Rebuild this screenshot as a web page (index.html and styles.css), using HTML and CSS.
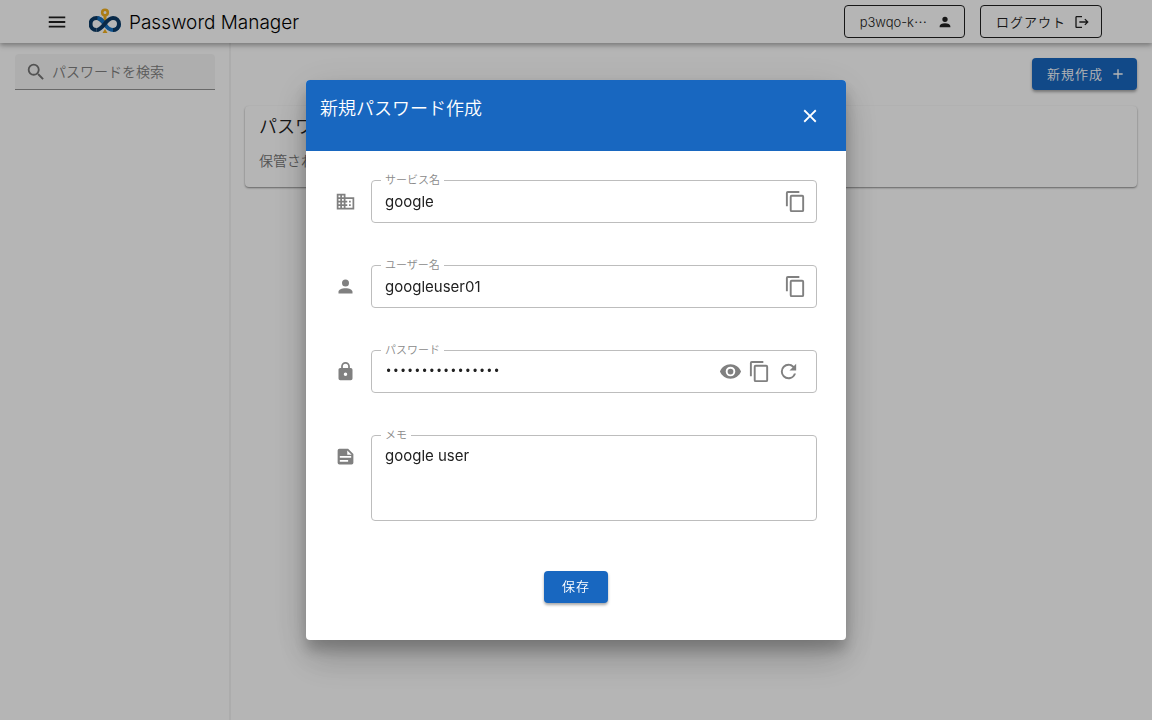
FILE: index.html
```html
<!DOCTYPE html>
<html lang="ja">
<head>
<meta charset="utf-8">
<meta name="viewport" content="width=device-width, initial-scale=1">
<title>Password Manager</title>
<link rel="stylesheet" href="styles.css">
</head>
<body>
<svg class="sprite" aria-hidden="true">
  <symbol id="copy" viewBox="0 0 24 24"><path d="M19 21H8V7h11m0-2H8a2 2 0 0 0-2 2v14a2 2 0 0 0 2 2h11a2 2 0 0 0 2-2V7a2 2 0 0 0-2-2m-3-4H4a2 2 0 0 0-2 2v14h2V3h12z"/></symbol>
  <symbol id="account" viewBox="0 0 24 24"><path d="M12 4a4 4 0 1 1 0 8 4 4 0 0 1 0-8m0 10c4.42 0 8 1.79 8 4v2H4v-2c0-2.21 3.58-4 8-4"/></symbol>
</svg>
<div class="app">
  <header class="topbar">
    <button class="icon-button menu-button" type="button" aria-label="メニュー">
      <svg class="icon icon-menu" viewBox="0 0 24 24"><path d="M3 6h18v2H3zm0 5h18v2H3zm0 5h18v2H3z"/></svg>
    </button>
    <a class="brand" href="#">
      <svg class="logo" viewBox="0 0 32 26" fill="none" aria-hidden="true">
        <path d="M16 7v8" stroke="#f2b01e" stroke-width="3"/>
        <path d="M13.500 25l2.500-4 2.500 4z" fill="#f2b01e"/>
        <path d="M16 16.500C13 12 10.500 10 7.500 10a6 6 0 0 0 0 12" stroke="#0c3b66" stroke-width="4"/>
        <path d="M8.500 10c3 .3 5.300 3 7.500 6.500 2.500 4 5.200 5.500 8.200 5.500a6 6 0 0 0 5.800-6" stroke="#1673c4" stroke-width="4"/>
        <path d="M7.500 22C14 22 17 10 24 10a6 6 0 0 1 0 12" stroke="#0c3b66" stroke-width="4"/>
        <circle cx="16" cy="4.500" r="2.800" stroke="#f2b01e" stroke-width="2.600"/>
      </svg>
      <span>Password Manager</span>
    </a>
    <div class="topbar-actions">
      <button class="outline-button user-button" type="button">p3wqo-k⋯<svg class="icon icon-small"><use href="#account"/></svg></button>
      <button class="outline-button logout-button" type="button">ログアウト<svg class="icon icon-small" viewBox="0 0 24 24"><path d="M17 7l-1.410 1.410L18.170 11H8v2h10.170l-2.580 2.580L17 17l5-5M4 5h8V3H4c-1.100 0-2 .9-2 2v14c0 1.100.9 2 2 2h8v-2H4z"/></svg></button>
    </div>
  </header>
  <div class="workspace">
    <aside class="sidebar">
      <label class="search">
        <svg class="icon" viewBox="0 0 24 24" aria-hidden="true"><path d="M9.500 3A6.500 6.500 0 0 1 16 9.500c0 1.610-.59 3.090-1.560 4.230l.27.27h.79l5 5-1.500 1.500-5-5v-.79l-.27-.27A6.516 6.516 0 0 1 9.500 16a6.500 6.500 0 0 1 0-13m0 2a4.500 4.500 0 1 0 0 9 4.500 4.500 0 0 0 0-9"/></svg>
        <input type="search" placeholder="パスワードを検索" aria-label="パスワードを検索">
      </label>
    </aside>
    <main class="content">
      <button class="primary-button create-button" type="button">新規作成<svg class="icon icon-small" viewBox="0 0 24 24"><path d="M19 13h-6v6h-2v-6H5v-2h6V5h2v6h6z"/></svg></button>
      <section class="card">
        <h2>パスワード</h2>
        <p>保管されたパスワードはありません</p>
      </section>
    </main>
  </div>
</div>
<div class="overlay">
  <div class="dialog" role="dialog" aria-modal="true" aria-labelledby="dialog-title">
    <div class="dialog-header">
      <h1 id="dialog-title">新規パスワード作成</h1>
      <button class="icon-button close-button" type="button" aria-label="閉じる">
        <svg class="icon" viewBox="0 0 24 24"><path d="M19 6.410L17.590 5 12 10.590 6.410 5 5 6.410 10.590 12 5 17.590 6.410 19 12 13.410 17.590 19 19 17.590 13.410 12z"/></svg>
      </button>
    </div>
    <form class="form">
      <div class="row">
        <svg class="icon row-icon" viewBox="0 0 24 24"><path d="M18 15h-2v2h2m0-6h-2v2h2m2 6h-8v-2h2v-2h-2v-2h2v-2h-2V9h8M10 7H8V5h2m0 6H8V9h2m0 6H8v-2h2m0 6H8v-2h2M6 7H4V5h2m0 6H4V9h2m0 6H4v-2h2m0 6H4v-2h2m6-10V3H2v18h20V7z"/></svg>
        <div class="field">
          <label for="service">サービス名</label>
          <input id="service" type="text" value="google">
          <button class="icon-button" type="button" aria-label="コピー"><svg class="icon icon-field"><use href="#copy"/></svg></button>
        </div>
      </div>
      <div class="row">
        <svg class="icon row-icon"><use href="#account"/></svg>
        <div class="field">
          <label for="username">ユーザー名</label>
          <input id="username" type="text" value="googleuser01">
          <button class="icon-button" type="button" aria-label="コピー"><svg class="icon icon-field"><use href="#copy"/></svg></button>
        </div>
      </div>
      <div class="row">
        <svg class="icon row-icon" viewBox="0 0 24 24"><path d="M12 17a2 2 0 0 0 2-2 2 2 0 0 0-2-2 2 2 0 0 0-2 2 2 2 0 0 0 2 2m6-9a2 2 0 0 1 2 2v10a2 2 0 0 1-2 2H6a2 2 0 0 1-2-2V10c0-1.110.9-2 2-2h1V6a5 5 0 0 1 10 0v2zm-6-5a3 3 0 0 0-3 3v2h6V6a3 3 0 0 0-3-3"/></svg>
        <div class="field field-password">
          <label for="password">パスワード</label>
          <input id="password" type="password" value="abcdefgh12345678">
          <button class="icon-button" type="button" aria-label="表示"><svg class="icon icon-field icon-eye" viewBox="0 0 24 24"><path d="M12 9a3 3 0 0 0-3 3 3 3 0 0 0 3 3 3 3 0 0 0 3-3 3 3 0 0 0-3-3m0 8a5 5 0 0 1-5-5 5 5 0 0 1 5-5 5 5 0 0 1 5 5 5 5 0 0 1-5 5m0-12.500C7 4.500 2.730 7.610 1 12c1.730 4.390 6 7.500 11 7.500s9.270-3.110 11-7.500c-1.730-4.390-6-7.500-11-7.500"/></svg></button>
          <button class="icon-button" type="button" aria-label="コピー"><svg class="icon icon-field"><use href="#copy"/></svg></button>
          <button class="icon-button" type="button" aria-label="再生成"><svg class="icon icon-field" viewBox="0 0 24 24"><path d="M17.650 6.350A7.958 7.958 0 0 0 12 4a8 8 0 0 0-8 8 8 8 0 0 0 8 8c3.730 0 6.840-2.550 7.730-6h-2.080A5.990 5.990 0 0 1 12 18a6 6 0 0 1-6-6 6 6 0 0 1 6-6c1.660 0 3.140.69 4.220 1.780L13 11h7V4z"/></svg></button>
        </div>
      </div>
      <div class="row">
        <svg class="icon row-icon" viewBox="0 0 24 24"><path d="M5 3a2 2 0 0 0-2 2v14a2 2 0 0 0 2 2h14a2 2 0 0 0 2-2V9l-6-6zm9 2l5 5h-5zM5.500 11.500h13v2h-13zm0 4.500H15v2H5.500z" fill-rule="evenodd"/></svg>
        <div class="field">
          <label for="memo">メモ</label>
          <textarea id="memo" rows="3">google user</textarea>
        </div>
      </div>
      <button class="primary-button save-button" type="button">保存</button>
    </form>
  </div>
</div>
</body>
</html>
```
FILE: styles.css
```css
* { box-sizing: border-box; }

body {
  margin: 0;
  color: #212121;
  background: #fff;
  font-family: Inter, "Noto Sans CJK JP", sans-serif;
  font-size: 14px;
  font-weight: 350;
}

button, input, textarea {
  font: inherit;
  color: inherit;
}

button {
  cursor: pointer;
}

h1, h2, p { margin: 0; }

.sprite {
  position: absolute;
  width: 0;
  height: 0;
}

.icon {
  display: block;
  flex: none;
  width: 22px;
  height: 22px;
  fill: currentColor;
}

.icon-small {
  width: 16px;
  height: 16px;
}

.icon-button {
  display: flex;
  padding: 0;
  border: 0;
  background: none;
}

.app {
  display: flex;
  flex-direction: column;
  min-height: 100vh;
}

.topbar {
  position: relative;
  display: flex;
  align-items: center;
  height: 43px;
  padding: 0 50px 0 46px;
  box-shadow: 0 2px 4px rgba(0, 0, 0, .2), 0 3px 6px rgba(0, 0, 0, .16);
}

.brand {
  display: flex;
  align-items: center;
  gap: 8px;
  margin-left: 21px;
  color: #000;
  font-size: 19px;
  font-weight: 300;
  text-decoration: none;
}

.brand span { padding-top: 2px; }

.logo {
  width: 32px;
  height: 26px;
  margin-bottom: 2px;
}

.topbar-actions {
  display: flex;
  gap: 15px;
  margin-left: auto;
}

.outline-button {
  display: flex;
  align-items: center;
  height: 33px;
  padding: 0 11px 0 15px;
  border: 1px solid #212121;
  border-radius: 4px;
  background: none;
  font-size: 13px;
}

.user-button {
  gap: 10px;
}

.logout-button {
  gap: 8px;
  letter-spacing: 1px;
}

.workspace {
  display: flex;
  flex: 1;
}

.sidebar {
  width: 231px;
  padding: 11px 14px 0 15px;
  border-right: 2px solid #f3f3f3;
}

.search {
  display: flex;
  align-items: center;
  gap: 5px;
  height: 36px;
  padding: 0 10px;
  border-bottom: 1px solid #949494;
  border-radius: 4px 4px 0 0;
  background: #f6f6f6;
  color: #757575;
}

.search input {
  flex: 1;
  min-width: 0;
  padding: 0;
  border: 0;
  outline: 0;
  background: none;
}

.search input::placeholder { color: #808080; }

.content {
  display: flex;
  flex: 1;
  flex-direction: column;
  gap: 16px;
  padding: 15px 15px 0 14px;
}

.primary-button {
  display: flex;
  align-items: center;
  gap: 7px;
  height: 32px;
  padding: 0 18px 3px;
  border: 0;
  border-radius: 4px;
  background: #1867c0;
  box-shadow: 0 2px 3px rgba(0, 0, 0, .35);
  color: #fff;
  font-size: 13px;
  letter-spacing: 1px;
}

.create-button {
  align-self: flex-end;
  padding: 0 11px 1px 15px;
}

.card {
  padding: 9px 14px 16px;
  border-radius: 4px;
  box-shadow: 0 1px 2px rgba(0, 0, 0, .45);
}

.card h2 {
  font-size: 18px;
  font-weight: 350;
  line-height: 24px;
}

.card p {
  margin-top: 12px;
  color: #757575;
  line-height: 20px;
}

.overlay {
  position: fixed;
  inset: 0;
  display: flex;
  align-items: center;
  justify-content: center;
  padding: 20px;
  background: rgba(0, 0, 0, .29);
}

.dialog {
  width: 100%;
  max-width: 540px;
  overflow: hidden;
  border-radius: 4px;
  background: #fff;
  box-shadow: 0 10px 14px rgba(0, 0, 0, .2), 0 22px 35px rgba(0, 0, 0, .14), 0 8px 42px rgba(0, 0, 0, .12);
}

.dialog-header {
  display: flex;
  align-items: center;
  justify-content: space-between;
  padding: 16px 25px 15px 14px;
  background: #1867c0;
  color: #fff;
}

.dialog-header h1 {
  align-self: flex-start;
  font-size: 18px;
  font-weight: 350;
  line-height: 26px;
}

.close-button {
  padding: 9px 0;
}

.form {
  display: flex;
  flex-direction: column;
  gap: 42px;
  padding: 29px 29px 37px;
}

.row {
  display: flex;
  align-items: flex-start;
  gap: 15px;
}

.row-icon {
  width: 21px;
  height: 43px;
  color: #808080;
}

.field {
  position: relative;
  display: flex;
  flex: 1;
  align-items: center;
  gap: 6px;
  min-height: 43px;
  padding: 0 9px 0 13px;
  border: 1px solid #bdbdbd;
  border-radius: 4px;
}

.field-password { padding-right: 16px; }

.field label {
  position: absolute;
  top: -9px;
  left: 9px;
  padding: 0 4px;
  background: #fff;
  color: #8a8a8a;
  font-size: 11px;
  line-height: 16px;
}

.field input,
.field textarea {
  flex: 1;
  min-width: 0;
  padding: 0;
  border: 0;
  outline: 0;
  background: none;
  font-size: 15px;
  font-weight: 400;
  line-height: 24px;
}

.field textarea {
  height: 84px;
  padding-top: 8px;
  resize: none;
}

.field input[type="password"] {
  font-family: "Liberation Mono", monospace;
  font-size: 12px;
}

.field .icon-button { color: #808080; }

.icon-field {
  width: 23px;
  height: 23px;
}

.save-button {
  align-self: center;
  margin-top: 8px;
}
```
